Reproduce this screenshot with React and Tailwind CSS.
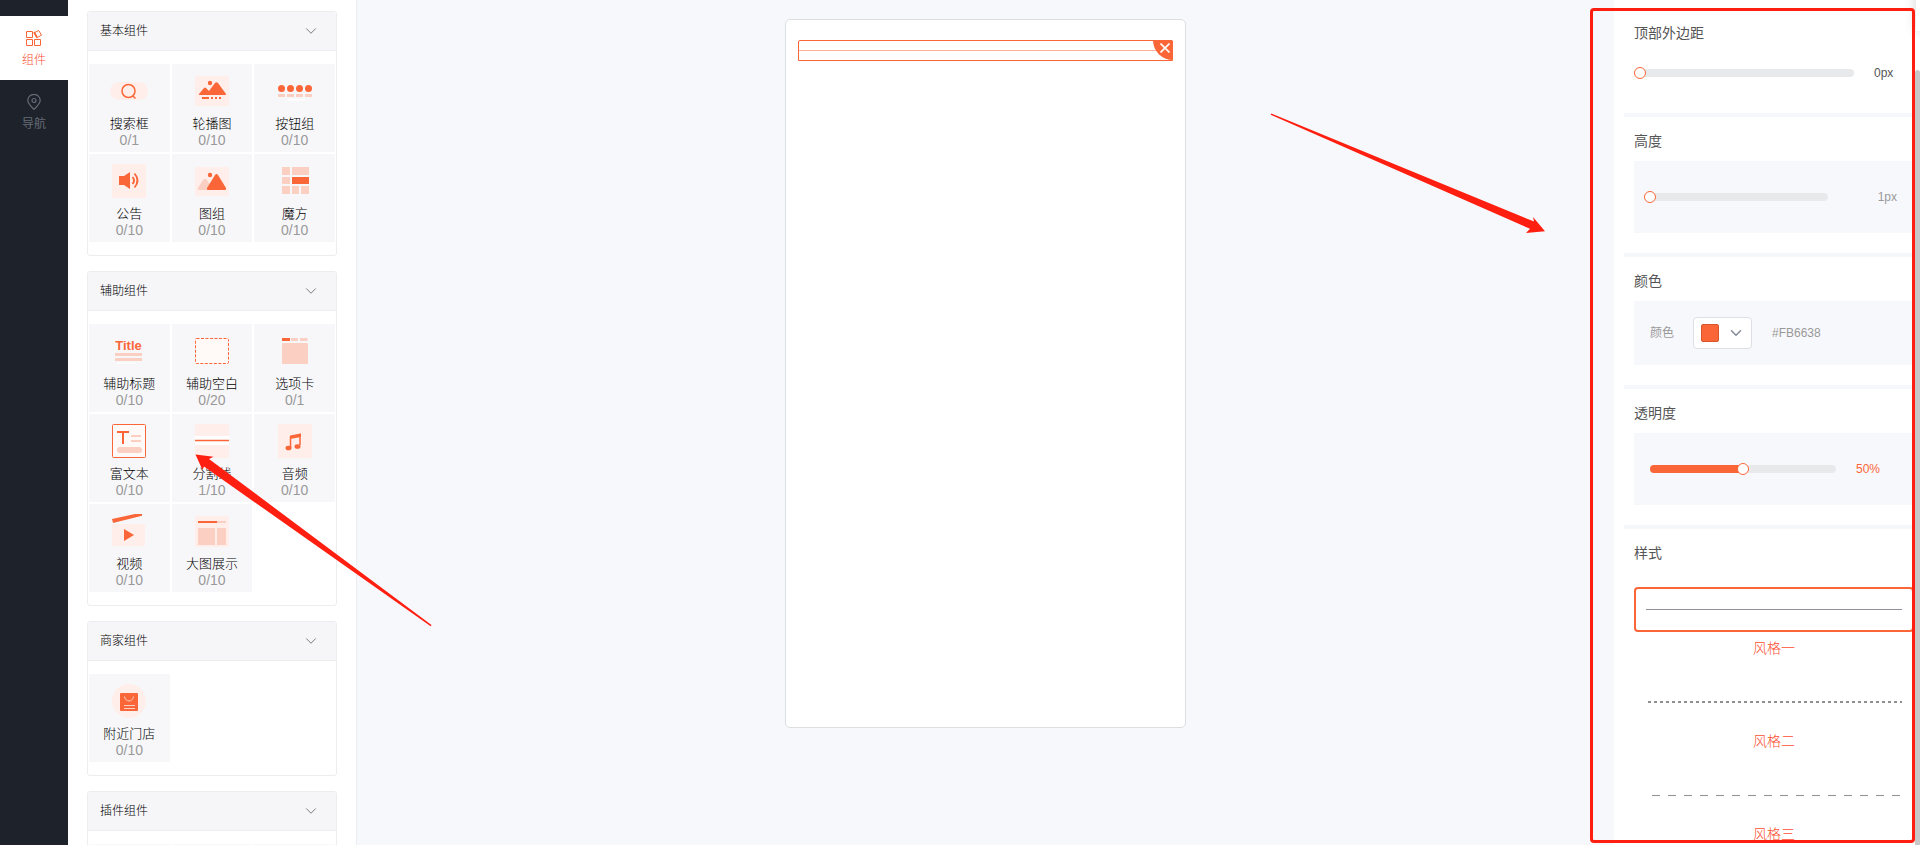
import React, { useState } from "react";
import { ChevronDown } from "lucide-react";

const O = "#fb6638";
const P = "#fbcfc1";
const L = "#ffeee9";

const icons = {
  search: (
    <>
      <rect x="-2" y="8" width="38" height="18" rx="9" fill={L} />
      <circle cx="16.5" cy="17" r="6.5" fill="none" stroke={O} strokeWidth="1.5" />
      <path d="M21 22l2.500 2.500" stroke={O} strokeWidth="1.500" />
    </>
  ),
  carousel: (
    <>
      <rect x="0" y="2" width="34" height="30" rx="1" fill={L} />
      <circle cx="15" cy="9" r="2.200" fill={O} />
      <path d="M4 20l5-6q1-1 2 0l3 3 6-8q1.500-1.500 3 0l8 11q.5 1-1 1H5q-2 0-1-1z" fill={O} />
      <path d="M7 24h7M16 24h2M20 24h2M24 24h2" stroke={O} strokeWidth="2" />
    </>
  ),
  buttons: (
    <>
      <path d="M10 25h17v1.500H10z" fill="#fff" />
      <circle cx="3.500" cy="14.500" r="3.500" fill={O} />
      <circle cx="12.500" cy="14.500" r="3.500" fill={O} />
      <circle cx="21.500" cy="14.500" r="3.500" fill={O} />
      <circle cx="30.500" cy="14.500" r="3.500" fill={O} />
      <path d="M0 21.500h7M9 21.500h7M18 21.500h7M27 21.500h7" stroke={P} strokeWidth="3" />
    </>
  ),
  notice: (
    <>
      <rect width="34" height="34" rx="1" fill={L} />
      <path d="M7 12h5l6-4v17l-6-4H7z" fill={O} />
      <path d="M20.500 13q3 3.500 0 7M22.500 9.500q6 7 0 14" fill="none" stroke={O} strokeWidth="1.800" />
    </>
  ),
  images: (
    <>
      <rect y="3" width="34" height="29" rx="1" fill={L} />
      <circle cx="15" cy="11" r="2.200" fill={O} />
      <path d="M3 24l5-8q2-2 4 0l4 6v4H4q-2 0-1-2z" fill={P} />
      <path d="M12 24l8-13q1.500-2 3 0l8 13q.5 2-1 2H13q-1.500 0-1-2z" fill={O} />
    </>
  ),
  cube: (
    <>
      <path d="M4 3h8v8H4zM14 3h17v8H14zM4 13h8v7H4zM4 22h8v8H4zM14 22h7v8h-7zM23 22h8v8h-8z" fill={P} />
      <path d="M14 13h17v7H14z" fill={O} />
    </>
  ),
  title: (
    <>
      <text x="16.500" y="16" textAnchor="middle" fontSize="13" fontWeight="700" fill={O} fontFamily="Liberation Sans">Title</text>
      <path d="M3 19h27v3H3zM3 24h27v3H3z" fill={P} />
      <path d="M5 28.500h19v1.500H5z" fill="#fff" />
    </>
  ),
  blank: (
    <rect x=".5" y="4.500" width="33" height="25" rx="1" fill="#fff9f7" stroke={O} strokeDasharray="3 1.500" />
  ),
  tabs: (
    <>
      <path d="M4 4h8v3H4z" fill={O} />
      <path d="M13 4h7v3h-7zM22 4h7.500v3H22z" fill={P} />
      <rect x="4" y="9" width="26" height="21" rx="1" fill={P} />
    </>
  ),
  rich: (
    <>
      <rect x=".5" y=".5" width="33" height="33" rx="1" fill="#fff9f7" stroke={O} />
      <path d="M5 8h12M11 8v12" stroke={O} strokeWidth="2" />
      <path d="M19 12h10M19 17h10" stroke={P} strokeWidth="2" />
      <rect x="5" y="23" width="25" height="6" rx="3" fill={P} />
    </>
  ),
  divider: (
    <>
      <path d="M0 0h34v34H0z" fill="#fff" />
      <path d="M0 0h34v12H0zM0 21h34v13H0z" fill={L} />
      <path d="M0 16.500h34" stroke={O} strokeWidth="1.500" />
    </>
  ),
  music: (
    <>
      <rect width="34" height="34" rx="1" fill={L} />
      <path d="M12.500 24V13l9.500-2.500V21" fill="none" stroke={O} strokeWidth="1.500" />
      <path d="M12 11.500l11-2v3.500l-11 2z" fill={O} />
      <ellipse cx="10.500" cy="24" rx="3" ry="2.300" fill={O} />
      <ellipse cx="19.500" cy="22.500" rx="3" ry="2.300" fill={O} />
    </>
  ),
  video: (
    <>
      <path d="M0 10h33v22H0z" fill={L} />
      <path d="M0 5L23 0h7v1.800L1 9z" fill={O} />
      <path d="M12 15l10 6-10 6z" fill={O} />
    </>
  ),
  large: (
    <>
      <rect y="2" width="34" height="31" rx="2" fill={L} />
      <path d="M3 8h19" stroke={O} strokeWidth="2" />
      <path d="M22 8h9" stroke={P} strokeWidth="2" />
      <path d="M3 14h17v17H3zM22 14h9v17h-9z" fill={P} />
    </>
  ),
  store: (
    <>
      <circle cx="17" cy="17" r="17" fill={L} />
      <rect x="8" y="9" width="18" height="18" rx="1" fill={O} />
      <path d="M12.500 12.500c1 6 8 6 9 0M12 21.500h11M12 24.500h11" fill="none" stroke={P} />
    </>
  ),
};

const groups = [
  { name: "基本组件", items: [["search", "搜索框", "0/1"], ["carousel", "轮播图", "0/10"], ["buttons", "按钮组", "0/10"], ["notice", "公告", "0/10"], ["images", "图组", "0/10"], ["cube", "魔方", "0/10"]] },
  { name: "辅助组件", items: [["title", "辅助标题", "0/10"], ["blank", "辅助空白", "0/20"], ["tabs", "选项卡", "0/1"], ["rich", "富文本", "0/10"], ["divider", "分割线", "1/10"], ["music", "音频", "0/10"], ["video", "视频", "0/10"], ["large", "大图展示", "0/10"]] },
  { name: "商家组件", items: [["store", "附近门店", "0/10"]] },
  { name: "插件组件", items: [["", "", ""], ["", "", ""], ["", "", ""]] },
];

function Tile({ icon, name, count }) {
  return (
    <button type="button" aria-label={name || "插件"} className="flex h-[88px] flex-col items-center bg-[#f7f7fa] pt-[10px]">
      <svg width="34" height="34" viewBox="0 0 34 34" className="shrink-0 overflow-visible" aria-hidden="true">{icons[icon]}</svg>
      <span className="mt-[7px] text-[13px] leading-[17px] font-light text-black">{name}</span>
      <span className="text-sm leading-4 text-[#999]">{count}</span>
    </button>
  );
}

function Group({ group }) {
  return (
    <section className="shrink-0 rounded-[3px] border border-[#ebedf0] bg-white">
      <button type="button" className="flex h-[39px] w-full items-center justify-between border-b border-[#ebedf0] bg-[#f6f6f9] pr-4 pl-3 text-xs font-light text-black">
        {group.name}
        <ChevronDown size={18} strokeWidth={1.3} className="text-[#777]" />
      </button>
      <div className="grid grid-cols-3 gap-0.5 px-px py-[13px]">
        {group.items.map(([icon, name, count], i) => (
          <Tile key={i} icon={icon} name={name} count={count} />
        ))}
      </div>
    </section>
  );
}

function Slider({ label, value, onChange, max, className }) {
  const pct = (value / max) * 100;
  return (
    <span className={"relative flex h-3 items-center " + className}>
      <span className="h-2 w-full overflow-hidden rounded bg-[#e8e9ea]">
        <span className="block h-2 bg-[#fb6638]" style={{ width: pct + "%" }} />
      </span>
      <input
        type="range"
        aria-label={label}
        min="0"
        max={max}
        value={value}
        onChange={(e) => onChange(Number(e.target.value))}
        className="absolute inset-0 m-0 h-3 w-full cursor-pointer appearance-none bg-transparent [&::-webkit-slider-thumb]:size-3 [&::-webkit-slider-thumb]:appearance-none [&::-webkit-slider-thumb]:rounded-full [&::-webkit-slider-thumb]:border [&::-webkit-slider-thumb]:border-solid [&::-webkit-slider-thumb]:border-[#fb6638] [&::-webkit-slider-thumb]:bg-white"
      />
    </span>
  );
}

function Section({ title, children }) {
  return (
    <section className="ml-2.5 border-b-4 border-[#f6f7fa] pt-3.5 pb-5 pl-2.5">
      <h2 className="mb-2.5 text-sm leading-5 text-[#555]">{title}</h2>
      {children}
    </section>
  );
}

function StyleOption({ label, selected, onSelect, children }) {
  return (
    <button type="button" onClick={onSelect} className="mb-[22px] block w-[280px]">
      <span className={"flex h-[45px] items-center rounded border-2 px-2.5 " + (selected ? "border-[#fb6638]" : "border-transparent")}>
        {children}
      </span>
      <span className="mt-1.5 block text-sm leading-5 font-light text-[#fb4f30]">{label}</span>
    </button>
  );
}

export default function App() {
  const [margin, setMargin] = useState(0);
  const [height, setHeight] = useState(0);
  const [opacity, setOpacity] = useState(50);
  const [style, setStyle] = useState(0);

  return (
    <div className="relative flex h-screen overflow-hidden bg-[#f7f8fc] font-['Liberation_Sans','Noto_Sans_CJK_SC',sans-serif]">
      <nav className="w-[68px] shrink-0 bg-[#1e222b] pt-4 text-xs">
        <a href="#components" className="flex h-16 flex-col items-center bg-white pt-3.5 font-light text-[#fb4f30]">
          <svg width="16" height="16" viewBox="0 0 16 16" fill="none" stroke="#fb6638" aria-hidden="true">
            <path d="M.5 1.500h6v6h-6zM.5 9.500h6v6h-6zM8.500 9.500h6v6h-6z" />
            <path d="M8 2.800l4.800-2.300 2.700 4.700-4.800 2.600z" />
            <path d="M8 2l3 5" strokeWidth="1.500" />
          </svg>
          <span className="mt-1 leading-5">组件</span>
        </a>
        <a href="#navigation" className="flex h-16 flex-col items-center pt-3.5 text-[#666b75]">
          <svg width="16" height="16" viewBox="0 0 16 16" fill="none" stroke="currentColor" strokeWidth="1.200" aria-hidden="true">
            <path d="M8 15.400C4.500 12 1.800 9.500 1.800 6.500a6.200 6.200 0 0 1 12.400 0C14.200 9.500 11.500 12 8 15.400z" />
            <circle cx="8" cy="6.500" r="2" />
          </svg>
          <span className="mt-1 leading-5">导航</span>
        </a>
      </nav>

      <aside className="flex w-[289px] shrink-0 flex-col gap-[15px] overflow-hidden border-r border-[#ebedf0] bg-white pt-[11px] pr-[19px] pl-[19px]">
        {groups.map((g) => (
          <Group key={g.name} group={g} />
        ))}
      </aside>

      <main className="flex min-w-0 flex-1 justify-center pt-[19px]">
        <div className="h-[709px] w-[401px] rounded-[5px] border border-[#dcdfe0] bg-white px-3 pt-5">
          <div className="relative flex h-[21px] items-center rounded-t-xs border border-[#fb6638]">
            <div className="h-px w-full bg-[#fdb29b]" />
            <button type="button" aria-label="删除" className="absolute -top-px -right-px flex size-5 items-center justify-center rounded-tr-xs rounded-bl-[20px] bg-[#fb6638] pb-1 pl-1 text-white">
              <svg width="10" height="10" viewBox="0 0 10 10" stroke="currentColor" strokeWidth="1.600" aria-hidden="true"><path d="M.5.5l9 9M9.500.5l-9 9" /></svg>
            </button>
          </div>
        </div>
      </main>

      <aside className="flex w-[306px] shrink-0 bg-white">
        <div className="min-w-0 flex-1 overflow-hidden pt-[9px]">
          <Section title="顶部外边距">
            <div className="flex h-10 items-center gap-5">
              <Slider label="顶部外边距" value={margin} onChange={setMargin} max={100} className="w-[220px]" />
              <output className="text-xs text-[#555]">{margin}px</output>
            </div>
          </Section>
          <Section title="高度">
            <div className="flex h-[72px] items-center justify-between bg-[#f7f8fc] pr-[18px] pl-2.5">
              <Slider label="高度" value={height} onChange={setHeight} max={19} className="w-[184px]" />
              <output className="text-xs text-[#999]">{height + 1}px</output>
            </div>
          </Section>
          <Section title="颜色">
            <div className="flex h-16 items-center bg-[#f7f8fc] pl-4 text-xs text-[#999]">
              <span className="w-[43px]">颜色</span>
              <button type="button" aria-label="选择颜色" className="flex h-8 w-[59px] items-center gap-2 rounded border border-[#dcdfe6] bg-white pl-[7px]">
                <span className="size-[18px] shrink-0 rounded-xs border border-[#d9552b] bg-[#fb6638]" />
                <ChevronDown size={18} strokeWidth={2} className="shrink-0 text-[#838b99]" />
              </button>
              <span className="ml-5">#FB6638</span>
            </div>
          </Section>
          <Section title="透明度">
            <div className="flex h-[72px] items-center gap-5 bg-[#f7f8fc] pl-4">
              <Slider label="透明度" value={opacity} onChange={setOpacity} max={100} className="w-[186px]" />
              <output className="text-xs text-[#fb6638]">{opacity}%</output>
            </div>
          </Section>
          <section className="pt-3.5 pl-5">
            <h2 className="mb-6 text-sm leading-5 text-[#555]">样式</h2>
            <StyleOption label="风格一" selected={style === 0} onSelect={() => setStyle(0)}>
              <svg width="100%" height="1" aria-hidden="true"><path d="M0 .5h256" stroke="#909399" /></svg>
            </StyleOption>
            <StyleOption label="风格二" selected={style === 1} onSelect={() => setStyle(1)}>
              <svg width="100%" height="3" aria-hidden="true"><path d="M2 1h254" stroke="#8f8f8f" strokeWidth="2" strokeDasharray="3 3" /></svg>
            </StyleOption>
            <StyleOption label="风格三" selected={style === 2} onSelect={() => setStyle(2)}>
              <svg width="100%" height="1" aria-hidden="true"><path d="M6 .5h248" stroke="#8f8f8f" strokeDasharray="8 8" /></svg>
            </StyleOption>
          </section>
        </div>
        <div className="w-[5px] shrink-0 bg-white pt-[70px]">
          <div className="h-full rounded-t bg-[#c8c8c8]" />
        </div>
      </aside>

      <div className="pointer-events-none absolute -top-2.5 -right-1 h-[41px] w-2 bg-white shadow-[0_0_12px_rgba(0,0,0,0.2)]" />
      <div className="pointer-events-none absolute top-2 right-[5px] bottom-0.5 w-[325px] rounded border-[3px] border-[#ff1f10]" />
      <svg className="pointer-events-none absolute top-[113px] left-[1270px]" width="276" height="121" viewBox="0 0 276 121" fill="#ff1f10" aria-hidden="true">
        <path d="M1.300.4L264 108.500l-1-4.500 12 14.300-19 1.700 4-4.200L.7 1.800z" />
      </svg>
      <svg className="pointer-events-none absolute top-[454px] left-[195px]" width="238" height="173" viewBox="0 0 238 173" fill="#ff1f10" aria-hidden="true">
        <path d="M.5.5l18 2.300-4.500 2.200L236.500 171l-.8 1.200L9 12.500 7.500 16z" />
      </svg>
    </div>
  );
}
